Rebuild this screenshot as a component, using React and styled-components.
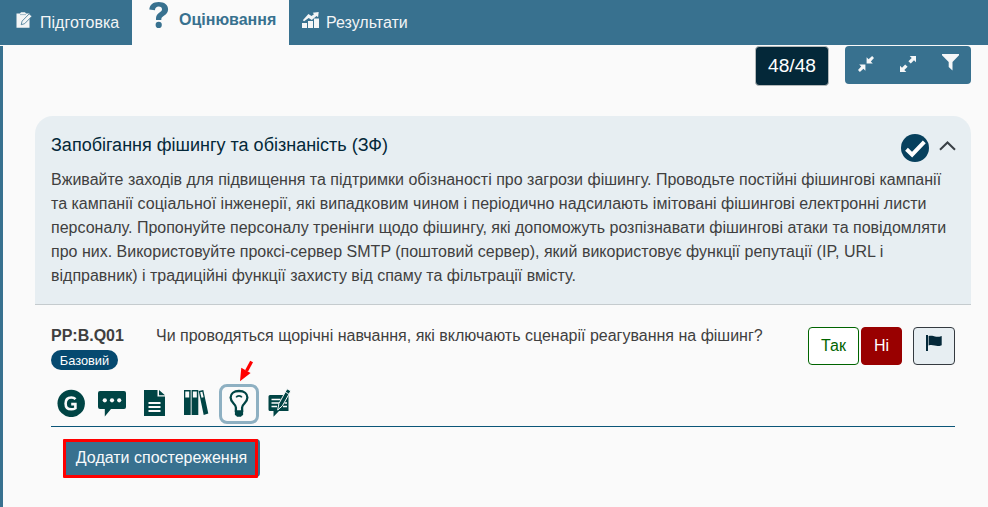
import React from "react";
import styled, { createGlobalStyle } from "styled-components";

const Global = createGlobalStyle`
  *, *::before, *::after { box-sizing: border-box; }
  body { margin: 0; background: #fafafa; overflow: hidden; font: 16px/24px "Liberation Sans", Arial, sans-serif; color: #3f3f3f; }
  button { font: inherit; margin: 0; padding: 0; cursor: pointer; }
  svg { display: block; flex: none; }
`;

const Page = styled.div`
  height: 507px;
  display: flex;
  flex-direction: column;
`;

const Nav = styled.nav`
  display: flex;
  height: 45px;
  background: #38718f;
`;

const Tab = styled.button`
  display: flex;
  align-items: flex-start;
  width: ${(p) => p.$w}px;
  height: 45px;
  border: 0;
  text-align: left;
  padding-left: ${(p) => p.$pad}px;
  gap: ${(p) => p.$gap}px;
  white-space: nowrap;
  background: ${(p) => (p.$active ? "#fafafa" : "transparent")};
  color: ${(p) => (p.$active ? "#38718f" : "#f3f5f6")};
  font-weight: ${(p) => (p.$active ? 700 : 400)};
  line-height: 24px;
`;

const TabIcon = styled.span`
  padding-top: ${(p) => p.$top}px;
`;

const TabLabel = styled.span`
  padding-top: ${(p) => p.$top}px;
`;

const Content = styled.main`
  flex: 1;
  margin-top: 1px;
  border-left: 3px solid #38718f;
  padding: 0 17px 0 32px;
`;

const Toolbar = styled.div`
  display: flex;
  justify-content: flex-end;
  gap: 16px;
  height: 40px;
`;

const Counter = styled.div`
  width: 74px;
  height: 40px;
  border: 1px solid #b5b9ba;
  border-radius: 4px;
  background: #042839;
  color: #fff;
  font-size: 19.2px;
  line-height: 37px;
  text-align: center;
`;

const ToolGroup = styled.div`
  display: flex;
  width: 126px;
  height: 38px;
  border-radius: 4px;
  background: #38718f;
`;

const Tool = styled.button`
  flex: 1;
  display: flex;
  justify-content: center;
  padding-top: ${(p) => p.$top}px;
  border: 0;
  background: transparent;
  color: #f5f7f8;
`;

const Card = styled.section`
  margin-top: 30px;
  height: 189px;
  border-radius: 18px 18px 0 0;
  border-bottom: 1px solid #c5cbce;
  background: #e7eef2;
  padding: 16px 15px 0 16px;
`;

const CardHead = styled.header`
  display: flex;
  justify-content: space-between;
  height: 36px;
`;

const Title = styled.h2`
  margin: 0;
  font-size: 18px;
  font-weight: 400;
  line-height: 26px;
  color: #042839;
`;

const HeadIcons = styled.div`
  display: flex;
  align-items: flex-start;
  gap: 10px;
  padding-top: 2px;
`;

const ChevronBox = styled.span`
  padding-top: 7px;
`;

const Line = styled.div`
  white-space: nowrap;
`;

const Question = styled.section`
  padding: 0 16px;
`;

const QuestionRow = styled.div`
  display: flex;
  height: 79px;
  padding-top: 19px;
`;

const CodeColumn = styled.div`
  width: 105px;
`;

const Code = styled.div`
  font-weight: 700;
`;

const Level = styled.span`
  display: block;
  width: 67px;
  height: 20px;
  margin-top: 2px;
  border-radius: 10px;
  background: #064a70;
  color: #fff;
  font-size: 12.8px;
  line-height: 21px;
  text-align: center;
`;

const QuestionText = styled.div`
  flex: 1;
  white-space: nowrap;
`;

const Answers = styled.div`
  display: flex;
  margin-top: 3px;
`;

const Answer = styled.button`
  width: ${(p) => p.$w}px;
  height: 38px;
  margin-left: ${(p) => p.$ml || 0}px;
  border: 1px solid ${(p) => p.$border};
  border-radius: 4px;
  background: ${(p) => p.$bg};
  color: ${(p) => p.$fg};
  line-height: 34px;
`;

const FlagIcon = styled.span`
  display: flex;
  justify-content: center;
  margin-top: -6px;
`;

const ActionBar = styled.div`
  position: relative;
  display: flex;
  align-items: flex-start;
  height: 43px;
  padding-left: 6px;
  border-bottom: 1px solid #0b5578;
`;

const Action = styled.button`
  width: ${(p) => p.$w}px;
  margin-right: ${(p) => p.$gap}px;
  padding-top: ${(p) => p.$top}px;
  border: 0;
  background: transparent;
  color: #004444;
`;

const SelectedAction = styled.button`
  display: flex;
  justify-content: center;
  width: 40px;
  height: 40px;
  margin-right: 9px;
  padding-right: 1px;
  border: 3px solid #8eb0c2;
  border-radius: 8px;
  background: #fafafa;
  color: #004444;
`;

const Pointer = styled.span`
  position: absolute;
  left: 187px;
  top: -24px;
`;

const AddRow = styled.div`
  padding: 12px 0 0 12px;
`;

const AddButton = styled.button`
  position: relative;
  width: 197px;
  height: 38px;
  border: 0;
  border-radius: 4px;
  background: #38718f;
  color: #f8fafb;
  line-height: 36px;
  white-space: nowrap;
  &::after {
    content: "";
    position: absolute;
    inset: 0 2px -1px 0;
    border: 3px solid #ff0000;
    border-radius: 1px;
  }
`;

const Edit = () => (
  <svg width="17" height="17" viewBox="0 0 17 17">
    <path d="M.5 1.5H4L5 .2h4l1 1.300h3.500v14.200H.5z" fill="#f3f5f6" />
    <path d="M4 2.600h6" stroke="#8aabbd" strokeWidth=".8" />
    <path d="M5.200 12.700l.9-3.600 7.100-7.200 2.800 2.300-7.400 7.500z" fill="#f3f5f6" stroke="#38718f" strokeWidth=".8" />
  </svg>
);

const QuestionMark = () => (
  <svg width="20" height="27" viewBox="0 0 20 27" fill="#38718f">
    <path d="M.3 7.400C.7 2.700 4.100 0 9.700 0c5.600 0 9.400 2.800 9.400 7.200 0 3.100-1.600 4.900-4.200 6.600-2 1.300-2.600 2-2.600 4.100H7c0-3.700.5-5.300 3.200-7.200 2.100-1.400 2.800-2 2.800-3.400 0-1.700-1.300-2.700-3.300-2.700-2.200 0-3.500 1.200-3.800 3.600z" />
    <circle cx="9.700" cy="22.900" r="3.100" />
  </svg>
);

const Results = () => (
  <svg width="18" height="16" viewBox="0 0 18 16" fill="#f3f5f6">
    <path d="M0 11h5v5H0zM6 9h5v7H6zM12 6.500h5V16h-5zM.8 8.200L6.400 2l3.100 2L12 2.300 10.800.8 16.700 0l-.6 5.300-1.600-1.300L9.800 8 6.700 5.900 2.100 9.200z" />
  </svg>
);

const Compress = () => (
  <svg width="16" height="16" viewBox="0 0 16 16" fill="currentColor">
    <path d="M8.600 7.400V1.200l2 2L14.100 0 16 1.900 12.800 5.400l2 2zM7.400 8.600v6.200l-2-2L1.900 16 0 14.100l3.200-3.500-2-2z" />
  </svg>
);

const Expand = () => (
  <svg width="16" height="16" viewBox="0 0 16 16" fill="currentColor">
    <path d="M16 0v6.300l-2-2-3.200 3.300-2.400-2.400L11.700 2l-2-2zM0 16V9.700l2 2 3.200-3.300 2.400 2.400L4.300 14l2 2z" />
  </svg>
);

const Filter = () => (
  <svg width="17" height="17" viewBox="0 0 17 17" fill="currentColor">
    <path d="M0 0h17v1.200L10.500 8v8.500L6.700 13V8L0 1.200z" />
  </svg>
);

const Check = () => (
  <svg width="28" height="28" viewBox="0 0 28 28">
    <circle cx="14" cy="14" r="14" fill="#07405d" />
    <path d="M5.500 15.200l5.600 5.400L23.300 7.800" fill="none" stroke="#fff" strokeWidth="4" />
  </svg>
);

const Chevron = () => (
  <svg width="17" height="10" viewBox="0 0 17 10">
    <path d="M1 8.800l7.500-7.300L16 8.800" fill="none" stroke="#3a4046" strokeWidth="2" />
  </svg>
);

const Flag = () => (
  <svg width="16" height="16" viewBox="0 0 16 16" fill="#042839">
    <path d="M0 0h2v16H0zM2.600 1c3.300-.8 4.600 0 6.400.5 2 .6 4 .5 6.700-.5v9.200c-3 1.200-4.900 1-7 .4-2.100-.6-3.600-.9-6.100-.2z" />
  </svg>
);

const Guidance = () => (
  <svg width="28" height="28" viewBox="0 0 28 28">
    <circle cx="14.200" cy="14.400" r="13.700" fill="currentColor" />
    <path d="M18.500 10.200C17.500 9.100 16 8.500 14.300 8.500c-3.500 0-5.700 2.300-5.700 5.900s2.200 5.900 5.700 5.900c1.700 0 3.100-.4 4.100-1.100v-4.100h-4.200" fill="none" stroke="#fafafa" strokeWidth="2.600" />
  </svg>
);

const Comment = () => (
  <svg width="28" height="26" viewBox="0 0 28 26">
    <path d="M2 0h24a2 2 0 0 1 2 2v14a2 2 0 0 1-2 2H13l-6.200 7.500V18H2a2 2 0 0 1-2-2V2a2 2 0 0 1 2-2z" fill="currentColor" />
    <g fill="#fafafa"><circle cx="6.800" cy="9.300" r="2.100" /><circle cx="14" cy="9.300" r="2.100" /><circle cx="21.200" cy="9.300" r="2.100" /></g>
  </svg>
);

const Document = () => (
  <svg width="22" height="26" viewBox="0 0 22 26">
    <path d="M0 0h13.500v6.500H21V26H0zM15 0l6 5.300h-6z" fill="currentColor" />
    <path d="M4.500 12.900h12M4.500 17h12M4.500 21.100h12" stroke="#fafafa" strokeWidth="2" />
  </svg>
);

const Library = () => (
  <svg width="25" height="26" viewBox="0 0 25 26">
    <path d="M0 0h6.700v25H0zM7.600 0h6.700v25H7.600zM14.700 1.100L19.300 0l5 23.500-4.600 1.400z" fill="currentColor" />
    <path d="M1.300 1.500h3.900v6H1.300zM8.900 1.500h3.900v6H8.900zM16.200 2.300l2.100-.5 1.300 5.400-2.100.6z" fill="#fafafa" />
  </svg>
);

const Bulb = () => (
  <svg width="20" height="32" viewBox="0 0 20 32">
    <path d="M6.900 25v-4.500c0-3.800-5.300-4.500-5.300-9.900C1.600 6.700 4.900 4 10 4s8.400 2.700 8.400 6.600c0 5.400-5.300 6.100-5.300 9.900V25" fill="none" stroke="currentColor" strokeWidth="2.300" />
    <path d="M7.200 10.300c1-1.900 4.600-1.900 5.600 0" fill="none" stroke="currentColor" strokeWidth="1.700" />
    <path d="M5.900 23.200h8.200v4.700l-1.300.9-.8 1H8l-.8-1-1.300-.9z" fill="currentColor" />
  </svg>
);

const Notes = () => (
  <svg width="24" height="30" viewBox="0 0 24 30">
    <path d="M2 7h18.500v16H11l-5.500 5.800V23H2a1.500 1.500 0 0 1-1.500-1.500v-13A1.500 1.500 0 0 1 2 7z" fill="currentColor" />
    <path d="M3.500 11.500h9M3.500 15h7.500M3.500 18.500h5.500M16.500 15h2.500M15 18.500h4" stroke="#fafafa" strokeWidth="1.300" />
    <path d="M9.700 22l1.200-6.300L19 .8l3.800 2.100-8.400 14.900z" fill="currentColor" stroke="#fafafa" strokeWidth="1" />
    <path d="M17.300 4l3.500 2" stroke="#fafafa" strokeWidth=".9" />
  </svg>
);

const RedArrow = () => (
  <svg width="16" height="22" viewBox="0 0 16 22">
    <path d="M13.600 1.400L8.500 11" stroke="#ff0000" strokeWidth="3.200" />
    <path d="M2 21.200L3.300 7.800 8 10.600l4.600 2.300z" fill="#ff0000" />
  </svg>
);

const description = [
  "Вживайте заходів для підвищення та підтримки обізнаності про загрози фішингу. Проводьте постійні фішингові кампанії",
  "та кампанії соціальної інженерії, які випадковим чином і періодично надсилають імітовані фішингові електронні листи",
  "персоналу. Пропонуйте персоналу тренінги щодо фішингу, які допоможуть розпізнавати фішингові атаки та повідомляти",
  "про них. Використовуйте проксі-сервер SMTP (поштовий сервер), який використовує функції репутації (IP, URL і",
  "відправник) і традиційні функції захисту від спаму та фільтрації вмісту.",
];

export default function App() {
  return (
    <Page>
      <Global />
      <Nav>
        <Tab $w={132} $pad={16} $gap={7}>
          <TabIcon $top={12}><Edit /></TabIcon>
          <TabLabel $top={11}>Підготовка</TabLabel>
        </Tab>
        <Tab $active $w={157} $pad={17} $gap={10}>
          <TabIcon $top={2}><QuestionMark /></TabIcon>
          <TabLabel $top={8}>Оцінювання</TabLabel>
        </Tab>
        <Tab $w={130} $pad={13} $gap={6}>
          <TabIcon $top={12}><Results /></TabIcon>
          <TabLabel $top={11}>Результати</TabLabel>
        </Tab>
      </Nav>
      <Content>
        <Toolbar>
          <Counter>48/48</Counter>
          <ToolGroup>
            <Tool $top={10}><Compress /></Tool>
            <Tool $top={10}><Expand /></Tool>
            <Tool $top={8}><Filter /></Tool>
          </ToolGroup>
        </Toolbar>
        <Card>
          <CardHead>
            <Title>Запобігання фішингу та обізнаність (ЗФ)</Title>
            <HeadIcons>
              <Check />
              <ChevronBox><Chevron /></ChevronBox>
            </HeadIcons>
          </CardHead>
          {description.map((text) => <Line key={text}>{text}</Line>)}
        </Card>
        <Question>
          <QuestionRow>
            <CodeColumn>
              <Code>PP:B.Q01</Code>
              <Level>Базовий</Level>
            </CodeColumn>
            <QuestionText>Чи проводяться щорічні навчання, які включають сценарії реагування на фішинг?</QuestionText>
            <Answers>
              <Answer $w={51} $border="#006400" $bg="#fff" $fg="#006400">Так</Answer>
              <Answer $w={41} $ml={2} $border="#990000" $bg="#990000" $fg="#fff">Ні</Answer>
              <Answer $w={42} $ml={11} $border="#343a40" $bg="#e7eef2" $fg="#042839">
                <FlagIcon><Flag /></FlagIcon>
              </Answer>
            </Answers>
          </QuestionRow>
          <ActionBar>
            <Action $w={28} $gap={13} $top={5}><Guidance /></Action>
            <Action $w={28} $gap={18} $top={7}><Comment /></Action>
            <Action $w={22} $gap={18} $top={6}><Document /></Action>
            <Action $w={25} $gap={10} $top={6}><Library /></Action>
            <SelectedAction><Bulb /></SelectedAction>
            <Action $w={24} $gap={0} $top={4}><Notes /></Action>
            <Pointer><RedArrow /></Pointer>
          </ActionBar>
          <AddRow>
            <AddButton>Додати спостереження</AddButton>
          </AddRow>
        </Question>
      </Content>
    </Page>
  );
}
